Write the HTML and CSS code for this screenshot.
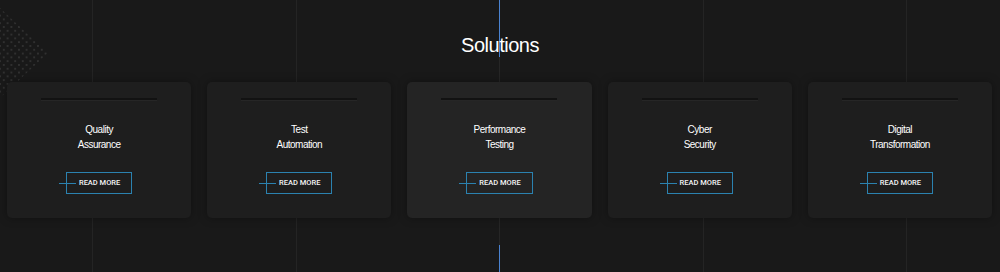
FILE: index.html
```html
<!DOCTYPE html>
<html lang="en">
<head>
    <meta charset="UTF-8">
    <meta name="viewport" content="width=device-width, initial-scale=1.0">
    <title>Solutions</title>
    <link rel="stylesheet" href="styles.css">
</head>
<body>
  <section id="solutions">
      <div class="dots"></div>
      <h2 class="title">Solutions</h2>
      <div class="cards">
          <div class="card">
              <span class="bar"></span>
              <h3>Quality<br>Assurance</h3>
              <a class="more" href="#">Read More</a>
          </div>
          <div class="card">
              <span class="bar"></span>
              <h3>Test<br>Automation</h3>
              <a class="more" href="#">Read More</a>
          </div>
          <div class="card active">
              <span class="bar"></span>
              <h3>Performance<br>Testing</h3>
              <a class="more" href="#">Read More</a>
          </div>
          <div class="card">
              <span class="bar"></span>
              <h3>Cyber<br>Security</h3>
              <a class="more" href="#">Read More</a>
          </div>
          <div class="card">
              <span class="bar"></span>
              <h3>Digital<br>Transformation</h3>
              <a class="more" href="#">Read More</a>
          </div>
      </div>
  </section>
</body>
</html>
```

FILE: styles.css
```css
body
{
    margin: 0;
    background-color: #191919;
    font-family: "Liberation Sans", Arial, sans-serif;
}
#solutions
{
    position: relative;
    height: 272px;
    overflow: hidden;
    box-sizing: border-box;
    padding-top: 33px;
    background-image: linear-gradient(to right,
        transparent 92px, #242424 92px, #242424 93px,
        transparent 93px, transparent 296px, #242424 296px, #242424 297px,
        transparent 297px, transparent 499px, #262626 499px, #262626 500px,
        transparent 500px, transparent 703px, #242424 703px, #242424 704px,
        transparent 704px, transparent 906px, #242424 906px, #242424 907px,
        transparent 907px);
}
/* blue beam above and below the middle card */
#solutions::before,
#solutions::after
{
    content: "";
    position: absolute;
    left: 499px;
    width: 1px;
    background-color: #4a82d0;
}
#solutions::before
{
    top: 0;
    height: 57px;
}
#solutions::after
{
    top: 245px;
    bottom: 0;
}
.dots
{
    position: absolute;
    left: 0;
    top: 8px;
    width: 50px;
    height: 90px;
    background-image:
        radial-gradient(circle, #303030 0.9px, transparent 1.1px),
        radial-gradient(circle, #303030 0.9px, transparent 1.1px);
    background-size: 7.6px 7.6px;
    background-position: 0 0, 3.8px 3.8px;
    clip-path: polygon(0 0, 48px 45px, 0 90px);
}
.title
{
    position: relative;
    margin: 0 0 25px;
    text-align: center;
    color: #ffffff;
    font-size: 20px;
    font-weight: normal;
    letter-spacing: -0.5px;
    line-height: 24px;
}
.cards
{
    position: relative;
    display: grid;
    grid-template-columns: repeat(5, 1fr);
    gap: 16px;
    padding: 0 8px 0 7px;
}
.card
{
    display: flex;
    flex-direction: column;
    align-items: center;
    height: 136px;
    box-sizing: border-box;
    padding-top: 16px;
    background-color: #1e1e1e;
    border-radius: 5px;
    box-shadow: 0 0 10px rgba(0, 0, 0, 0.35);
}
.card.active
{
    background-color: #242424;
}
.bar
{
    display: block;
    width: 116px;
    height: 2px;
    background-color: #121212;
    box-shadow: 0 1px 0 #262626;
}
.card h3
{
    margin: 22px 0 20px;
    color: #ffffff;
    font-size: 10px;
    font-weight: normal;
    letter-spacing: -0.5px;
    line-height: 15px;
    text-align: center;
}
.more
{
    position: relative;
    display: block;
    padding: 0 11px 0 12px;
    height: 20px;
    line-height: 20px;
    border: 1px solid #2b82b0;
    color: #f4f4f4;
    font-family: Roboto, "Liberation Sans", sans-serif;
    font-size: 7.5px;
    font-weight: 500;
    text-transform: uppercase;
    text-decoration: none;
}
.more::before
{
    content: "";
    position: absolute;
    left: -8px;
    top: 10px;
    width: 17px;
    height: 1px;
    background-color: #2b82b0;
}
```
